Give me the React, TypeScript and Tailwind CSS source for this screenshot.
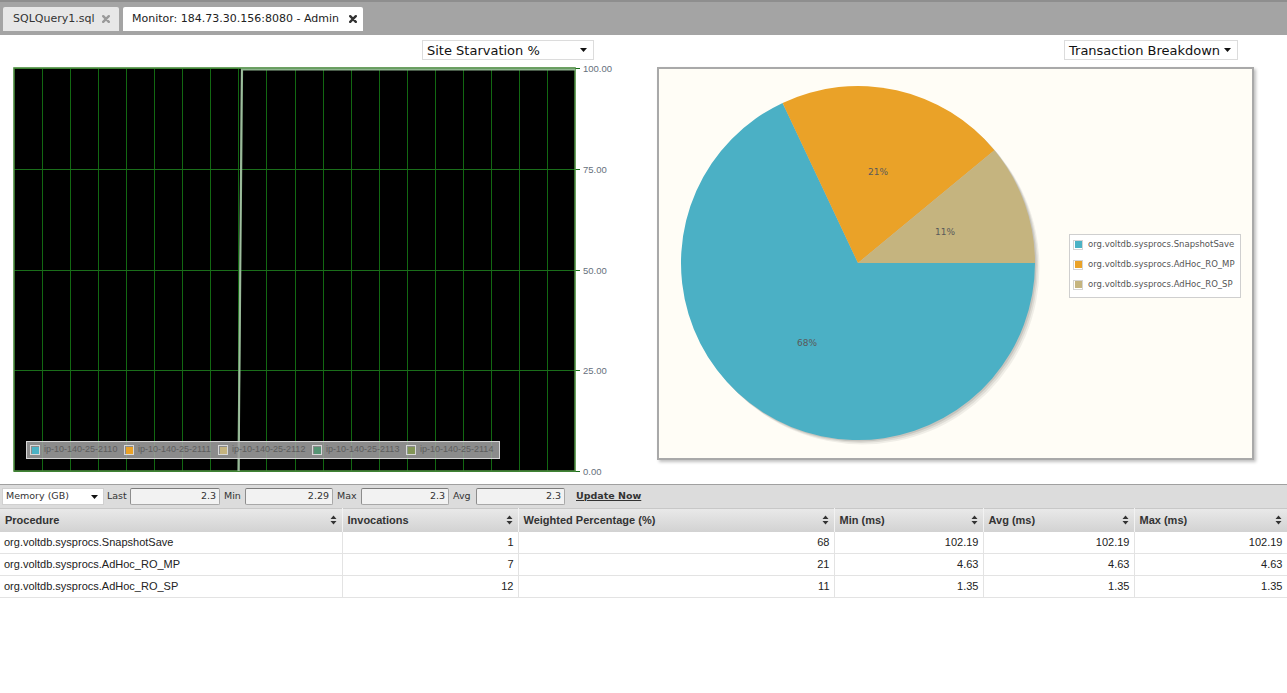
import React from 'react';

const legendSeries = [
  { name: 'ip-10-140-25-2110', color: '#4bb2c5' },
  { name: 'ip-10-140-25-2111', color: '#eaa228' },
  { name: 'ip-10-140-25-2112', color: '#c5b47f' },
  { name: 'ip-10-140-25-2113', color: '#579575' },
  { name: 'ip-10-140-25-2114', color: '#839557' },
];

const pieLegend = [
  { name: 'org.voltdb.sysprocs.SnapshotSave', color: '#4bb2c5' },
  { name: 'org.voltdb.sysprocs.AdHoc_RO_MP', color: '#eaa228' },
  { name: 'org.voltdb.sysprocs.AdHoc_RO_SP', color: '#c5b47f' },
];

const rows = [
  ['org.voltdb.sysprocs.SnapshotSave', '1', '68', '102.19', '102.19', '102.19'],
  ['org.voltdb.sysprocs.AdHoc_RO_MP', '7', '21', '4.63', '4.63', '4.63'],
  ['org.voltdb.sysprocs.AdHoc_RO_SP', '12', '11', '1.35', '1.35', '1.35'],
];

const columns = [
  { label: 'Procedure', width: 342 },
  { label: 'Invocations', width: 176 },
  { label: 'Weighted Percentage (%)', width: 316 },
  { label: 'Min (ms)', width: 149 },
  { label: 'Avg (ms)', width: 151 },
  { label: 'Max (ms)', width: 153 },
];

function CloseIcon({ color }: { color: string }) {
  return (
    <svg width="8" height="8" viewBox="0 0 8 8">
      <path d="M1.2 1.2 L6.8 6.8 M6.8 1.2 L1.2 6.8" stroke={color} strokeWidth="2.4" strokeLinecap="round" />
    </svg>
  );
}

function SortIcon() {
  return (
    <svg width="7" height="10" viewBox="0 0 7 10">
      <path d="M3.5 0.5 L6.5 4 L0.5 4 Z M0.5 6 L6.5 6 L3.5 9.5 Z" fill="#333" />
    </svg>
  );
}

function Caret() {
  return (
    <svg width="7" height="4" viewBox="0 0 7 4">
      <path d="M0 0 L7 0 L3.5 4 Z" fill="#111" />
    </svg>
  );
}

function Dropdown({ label, width }: { label: string; width: number }) {
  return (
    <div
      className="flex h-[20px] items-center justify-between border border-[#dcdcdc] bg-white pl-[4px] pr-[6px] font-['DejaVu_Sans',sans-serif] text-[13px] text-[#111]"
      style={{ width }}
    >
      <span className="leading-none">{label}</span>
      <Caret />
    </div>
  );
}

function LineChart() {
  const left = 14;
  const right = 575;
  const top = 8;
  const bottom = 411;
  const colW = (right - left) / 20;
  const ticks = ['100.00', '75.00', '50.00', '25.00', '0.00'];
  return (
    <div className="relative">
      <svg width="640" height="424" className="block">
        <rect x={left} y={top} width={right - left} height={bottom - top} fill="#000" />
        {Array.from({ length: 19 }).map((_, i) => {
          const x = Math.round(left + (i + 1) * colW) + 0.5;
          return <line key={i} x1={x} x2={x} y1={top} y2={bottom} stroke="#126812" strokeWidth="1" />;
        })}
        {ticks.map((t, i) => {
          const y = Math.round(top + (i * (bottom - top)) / 4) + 0.5;
          return (
            <g key={t}>
              <line x1={left} x2={580} y1={y} y2={y} stroke="#1a6e1a" strokeWidth="1" />
              <text
                x={583}
                y={y + 3}
                fontSize="9.5"
                fontFamily="Liberation Sans, Arial, sans-serif"
                fill="#66707c"
              >
                {t}
              </text>
            </g>
          );
        })}
        <rect
          x={left}
          y={top}
          width={right - left}
          height={bottom - top}
          fill="none"
          stroke="#4a8a3c"
          strokeWidth="1.6"
        />
        <path d="M238.5 411 L242 9.5 L575 9.5" fill="none" stroke="#8fb58f" strokeWidth="2.2" />
        <path d="M239 411 L241.5 10" fill="none" stroke="#a8c2a8" strokeWidth="0.8" />
      </svg>
      <div className="absolute left-[26px] top-[381px] flex h-[18px] w-[474px] items-center border border-[#d6d6d6] bg-[rgba(162,162,162,0.86)] pl-[3px] font-['Liberation_Sans',Arial,sans-serif] text-[9px] text-[#5e5e5e]">
        {legendSeries.map((s) => (
          <div key={s.name} className="flex w-[94px] shrink-0 items-center whitespace-nowrap">
            <span className="mr-[4px] flex h-[10px] w-[10px] shrink-0 items-center justify-center border border-[#d8d8d8]">
              <span className="h-[7px] w-[7px]" style={{ backgroundColor: s.color }} />
            </span>
            <span>{s.name}</span>
          </div>
        ))}
      </div>
    </div>
  );
}

function PieChart() {
  return (
    <div className="flex h-[393px] w-[597px] items-start border-2 border-[#a9a9a9] bg-[#fffdf6] shadow-[2px_2px_3px_rgba(0,0,0,0.25)]">
      <svg width="366" height="366" className="ml-[21px] mt-[16px] block shrink-0">
        <circle cx="182.5" cy="182.5" r="177" fill="rgba(0,0,0,0.06)" />
        <circle cx="181" cy="181" r="177" fill="rgba(0,0,0,0.08)" />
        <circle cx="179.5" cy="179.5" r="177" fill="rgba(0,0,0,0.1)" />
        <path d="M178 178 L102.6 17.9 A177 177 0 1 0 355 178 Z" fill="#4bb0c5" />
        <path d="M178 178 L314.4 65.2 A177 177 0 0 0 102.6 17.9 Z" fill="#eaa228" />
        <path d="M178 178 L355 178 A177 177 0 0 0 314.4 65.2 Z" fill="#c5b47f" />
        <g fontSize="9" fontFamily="DejaVu Sans, sans-serif" fill="#5a5a5a" textAnchor="middle">
          <text x="198" y="90">21%</text>
          <text x="265" y="150">11%</text>
          <text x="127" y="261">68%</text>
        </g>
      </svg>
      <div className="ml-[23px] mt-[165px] flex w-[172px] flex-col gap-[7px] border border-[#cfcfcf] bg-white pb-[6px] pt-[3px] pl-[3px] font-['DejaVu_Sans',sans-serif] text-[8.5px] text-[#555]">
        {pieLegend.map((s) => (
          <div key={s.name} className="flex h-[13px] items-center">
            <span className="mr-[5px] flex h-[10px] w-[10px] items-center justify-center border border-[#d4d4d4]">
              <span className="h-[7px] w-[7px]" style={{ backgroundColor: s.color }} />
            </span>
            <span className="whitespace-nowrap">{s.name}</span>
          </div>
        ))}
      </div>
    </div>
  );
}

function StatInput({ value, width }: { value: string; width: number }) {
  return (
    <div
      className="flex h-[17px] items-center justify-end rounded-[2px] border border-[#a8a8a8] border-t-[#7c7c7c] border-l-[#8c8c8c] bg-[#f2f2f2] pr-[3px]"
      style={{ width }}
    >
      {value}
    </div>
  );
}

export default function App() {
  return (
    <div className="h-[693px] w-[1287px] overflow-hidden bg-white">
      {/* tab strip */}
      <div className="flex h-[35px] items-start gap-[4px] border-t-2 border-[#8e8e8e] bg-[#a4a4a4] pl-[3px] pt-[5px] font-['DejaVu_Sans',sans-serif] text-[11px]">
        <div className="flex h-[24px] w-[116px] items-center justify-between rounded-t-[2px] bg-[#e7e7e7] pl-[10px] pr-[9px] text-[#333]">
          <span>SQLQuery1.sql</span>
          <CloseIcon color="#9a9a9a" />
        </div>
        <div className="flex h-[24px] w-[240px] items-center justify-between rounded-t-[2px] bg-white pl-[9px] pr-[6px] text-[#222]">
          <span>Monitor: 184.73.30.156:8080 - Admin</span>
          <CloseIcon color="#333" />
        </div>
      </div>

      {/* charts */}
      <div className="flex h-[449px]">
        <div className="w-[657px] shrink-0">
          <div className="mt-[5px] flex pl-[422px]">
            <Dropdown label="Site Starvation %" width={172} />
          </div>
          <LineChart />
        </div>
        <div className="w-[597px] shrink-0">
          <div className="mt-[5px] flex justify-end pr-[16px]">
            <Dropdown label="Transaction Breakdown" width={174} />
          </div>
          <div className="mt-[7px]">
            <PieChart />
          </div>
        </div>
      </div>

      {/* stats bar */}
      <div className="flex h-[24px] items-center border-t border-[#a0a0a0] bg-[#dcdcdc] pl-[2px] font-['DejaVu_Sans',sans-serif] text-[9.5px] text-[#333]">
        <div className="flex h-[17px] w-[102px] items-center justify-between border border-[#d0d0d0] bg-white pl-[3px] pr-[5px]">
          <span>Memory (GB)</span>
          <Caret />
        </div>
        <span className="w-[26px] pl-[3px]">Last</span>
        <StatInput value="2.3" width={90} />
        <span className="w-[25px] pl-[4px]">Min</span>
        <StatInput value="2.29" width={88} />
        <span className="w-[28px] pl-[4px]">Max</span>
        <StatInput value="2.3" width={88} />
        <span className="w-[27px] pl-[4px]">Avg</span>
        <StatInput value="2.3" width={89} />
        <span className="ml-[11px] font-bold underline">Update Now</span>
      </div>

      {/* procedure table */}
      <table className="w-[1287px] table-fixed border-collapse font-['Liberation_Sans',Arial,sans-serif] text-[11px]">
        <colgroup>
          {columns.map((c) => (
            <col key={c.label} style={{ width: c.width }} />
          ))}
        </colgroup>
        <thead>
          <tr className="h-[23px] bg-gradient-to-b from-[#e9e9e9] to-[#d2d2d2]">
            {columns.map((c) => (
              <th
                key={c.label}
                className="border-r border-t border-[#f2f2f2] border-t-[#c8c8c8] px-[5px] text-left font-bold text-[#333]"
              >
                <div className="flex items-center justify-between">
                  <span>{c.label}</span>
                  <SortIcon />
                </div>
              </th>
            ))}
          </tr>
        </thead>
        <tbody>
          {rows.map((r) => (
            <tr key={r[0]} className="h-[22px] border-b border-[#e3e3e3]">
              {r.map((cell, i) => (
                <td
                  key={i}
                  className={`border-r border-[#e3e3e3] px-[4px] text-[#222] ${i === 0 ? 'text-left' : 'text-right'}`}
                >
                  {cell}
                </td>
              ))}
            </tr>
          ))}
        </tbody>
      </table>
    </div>
  );
}
